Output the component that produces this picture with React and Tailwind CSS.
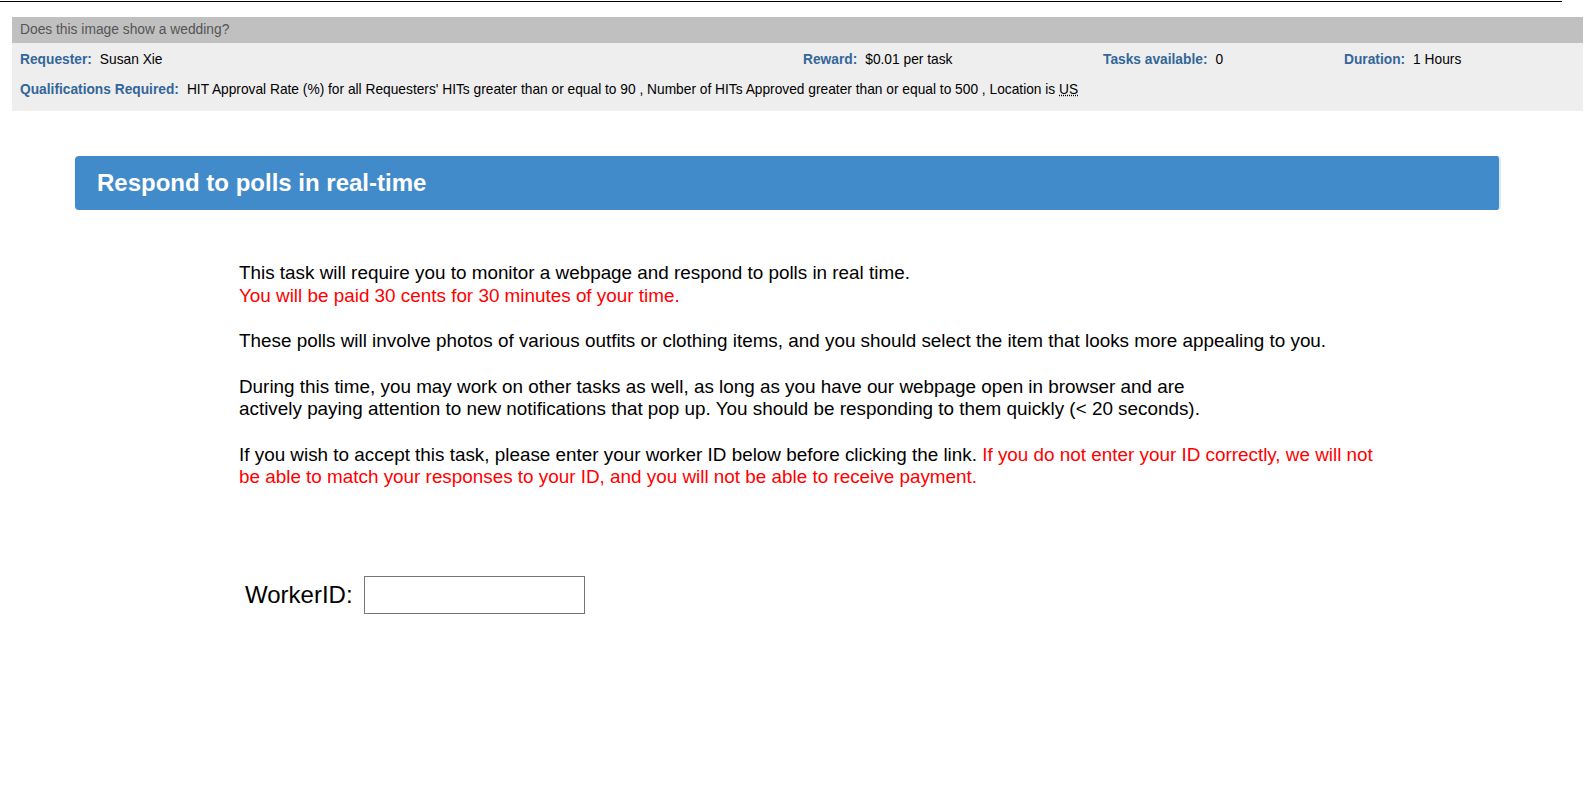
export default function App() {
  return (
    <div className="min-h-[796px] w-[1590px] bg-white text-black" style={{ fontFamily: '"Liberation Sans", Arial, sans-serif' }}>
      {/* top rule */}
      <div className="pt-px">
        <div className="h-px w-[1562px] bg-black" />
      </div>

      {/* HIT info */}
      <div className="ml-[12px] mt-[15px] w-[1571px]">
        <div className="flex h-[26px] items-center bg-[#c0c0c0] pl-[8px] text-[13.8px] text-[#555555]">
          Does this image show a wedding?
        </div>
        <div className="h-[68px] bg-[#eeeeee] pl-[8px] pt-[8px] text-[13.75px]">
          <div className="flex h-[18px] items-center">
            <div className="w-[783px]">
              <span className="font-bold text-[#336699]">Requester:</span>
              <span className="ml-[8px]">Susan Xie</span>
            </div>
            <div className="w-[300px]">
              <span className="font-bold text-[#336699]">Reward:</span>
              <span className="ml-[8px]">$0.01 per task</span>
            </div>
            <div className="w-[241px]">
              <span className="font-bold text-[#336699]">Tasks available:</span>
              <span className="ml-[8px]">0</span>
            </div>
            <div>
              <span className="font-bold text-[#336699]">Duration:</span>
              <span className="ml-[8px]">1 Hours</span>
            </div>
          </div>
          <div className="mt-[12px] flex h-[18px] items-center">
            <span className="font-bold text-[#336699]">Qualifications Required:</span>
            <span className="ml-[8px]">
              HIT Approval Rate (%) for all Requesters' HITs greater than or equal to 90 , Number of HITs Approved greater than or equal to 500 , Location is{' '}
              <abbr className="underline decoration-dotted" title="United States">US</abbr>
            </span>
          </div>
        </div>
      </div>

      {/* banner */}
      <div className="ml-[75px] mt-[45px] flex h-[54px] w-[1426px] items-center rounded-[4px] border-r-2 border-[#dfe9f4] bg-[#428bca] pl-[22px]">
        <h1 className="text-[24px] font-bold text-white">Respond to polls in real-time</h1>
      </div>

      {/* instructions */}
      <div className="ml-[239px] mt-[52px] w-[1160px] text-[18.88px] leading-[22.7px]">
        <p>
          This task will require you to monitor a webpage and respond to polls in real time.
          <br />
          <span className="text-[#ff0000]">You will be paid 30 cents for 30 minutes of your time.</span>
        </p>
        <br />
        <p>These polls will involve photos of various outfits or clothing items, and you should select the item that looks more appealing to you.</p>
        <br />
        <p>
          During this time, you may work on other tasks as well, as long as you have our webpage open in browser and are
          <br />
          actively paying attention to new notifications that pop up. You should be responding to them quickly (&lt; 20 seconds).
        </p>
        <br />
        <p>
          If you wish to accept this task, please enter your worker ID below before clicking the link.{' '}
          <span className="text-[#ff0000]">
            If you do not enter your ID correctly, we will not be able to match your responses to your ID, and you will not be able to receive payment.
          </span>
        </p>
      </div>

      {/* worker id */}
      <div className="ml-[245px] mt-[87px] flex items-center gap-[11px]">
        <label className="text-[24px]">WorkerID:</label>
        <input type="text" className="h-[38px] w-[221px] border border-[#767676] bg-white px-2 outline-none" />
      </div>
    </div>
  );
}
